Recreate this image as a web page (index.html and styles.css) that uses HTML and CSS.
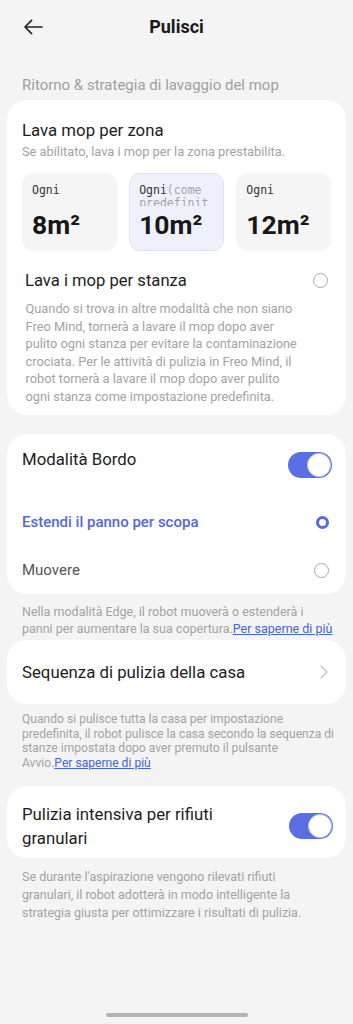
FILE: index.html
```html
<!DOCTYPE html>
<html lang="it">
<head>
<meta charset="utf-8">
<title>Pulisci</title>
<link rel="stylesheet" href="styles.css">
</head>
<body>
<header class="topbar">
  <button class="back" aria-label="Indietro">
    <svg width="20" height="16" viewBox="0 0 20 16"><path d="M19 8H2M8.6 1.4L2 8l6.6 6.6" fill="none" stroke="#222" stroke-width="1.7" stroke-linecap="round" stroke-linejoin="round"/></svg>
  </button>
  <h1 class="title">Pulisci</h1>
  <span></span>
</header>

<div class="section-label">Ritorno &amp; strategia di lavaggio del mop</div>

<section class="card card-mop">
  <div class="card-title">Lava mop per zona</div>
  <div class="card-sub">Se abilitato, lava i mop per la zona prestabilita.</div>
  <div class="tiles">
    <div class="tile">
      <div class="tile-label">Ogni</div>
      <div class="tile-value">8m²</div>
    </div>
    <div class="tile is-selected">
      <div class="tile-label">Ogni<span class="tile-hint">(come predefinito)</span></div>
      <div class="tile-value">10m²</div>
    </div>
    <div class="tile">
      <div class="tile-label">Ogni</div>
      <div class="tile-value">12m²</div>
    </div>
  </div>
  <div class="stanza-row">
    <span>Lava i mop per stanza</span>
    <span class="radio"></span>
  </div>
  <p class="desc">Quando si trova in altre modalità che non siano<br>Freo Mind, tornerà a lavare il mop dopo aver<br>pulito ogni stanza per evitare la contaminazione<br>crociata. Per le attività di pulizia in Freo Mind, il<br>robot tornerà a lavare il mop dopo aver pulito<br>ogni stanza come impostazione predefinita.</p>
</section>

<section class="card card-edge">
  <div class="edge-head">
    <span class="row-title">Modalità Bordo</span>
    <span class="switch"><span class="knob"></span></span>
  </div>
  <div class="option is-active">
    <span>Estendi il panno per scopa</span>
    <span class="radio radio-on"></span>
  </div>
  <div class="option">
    <span>Muovere</span>
    <span class="radio"></span>
  </div>
</section>
<p class="note note-a">Nella modalità Edge, il robot muoverà o estenderà i<br>panni per aumentare la sua copertura.<a href="#">Per saperne di più</a></p>

<section class="card card-seq">
  <span class="row-title">Sequenza di pulizia della casa</span>
  <svg class="chevron" width="8" height="14" viewBox="0 0 8 14"><path d="M1 1l6 6-6 6" fill="none" stroke="#c2c2c2" stroke-width="1.3" stroke-linecap="round" stroke-linejoin="round"/></svg>
</section>
<p class="note note-b">Quando si pulisce tutta la casa per impostazione<br>predefinita, il robot pulisce la casa secondo la sequenza di<br>stanze impostata dopo aver premuto il pulsante<br>Avvio.<a href="#">Per saperne di più</a></p>

<section class="card card-granular">
  <span class="row-title granular-title">Pulizia intensiva per rifiuti granulari</span>
  <span class="switch"><span class="knob"></span></span>
</section>
<p class="note note-c">Se durante l'aspirazione vengono rilevati rifiuti<br>granulari, il robot adotterà in modo intelligente la<br>strategia giusta per ottimizzare i risultati di pulizia.</p>

<div class="home-indicator"></div>
</body>
</html>
```

FILE: styles.css
```css
* { box-sizing: border-box; }

body {
  margin: 0;
  min-height: 1024px;
  background: #f4f4f4;
  font-family: Roboto, "Noto Sans", sans-serif;
  color: #1d1d1d;
  display: flex;
  flex-direction: column;
}

.topbar {
  height: 52px;
  display: grid;
  grid-template-columns: 1fr auto 1fr;
  align-items: center;
}

.back {
  justify-self: start;
  margin-left: 23px;
  padding: 0;
  border: 0;
  background: none;
  display: flex;
  margin-top: 1px;
}

.title {
  margin: 2px 0 0;
  font-size: 18px;
  font-weight: 700;
  line-height: 24px;
  color: #1a1a1a;
}

.section-label {
  margin: 23px 22px 5px;
  font-size: 15px;
  line-height: 20px;
  color: #a0a0a0;
}

.card {
  margin: 0 7px;
  background: #fff;
  border-radius: 20px;
}

.card-mop {
  padding: 19px 15px 10px;
}

.card-title {
  font-size: 16.8px;
  line-height: 22px;
}

.card-sub {
  margin-top: 2.5px;
  font-size: 12.8px;
  line-height: 16px;
  color: #a3a3a3;
}

.tiles {
  margin-top: 13.5px;
  display: grid;
  grid-template-columns: repeat(3, 1fr);
  gap: 12.5px;
}

.tile {
  background: #f5f5f5;
  border: 1px solid transparent;
  border-radius: 11px;
  padding: 9.5px 10px 10px 9px;
}

.tile.is-selected {
  background: #eef0fc;
  border-color: #dde2f6;
}

.tile-label {
  width: 71px;
  height: 22.5px;
  overflow: hidden;
  overflow-wrap: anywhere;
  font-family: "DejaVu Sans Mono", monospace;
  font-size: 11.5px;
  line-height: 13px;
  color: #333;
}

.tile-hint {
  color: #a2a4ae;
}

.tile-value {
  margin-top: 4px;
  font-size: 26.5px;
  line-height: 30px;
  font-weight: 700;
  color: #171717;
}

.stanza-row {
  margin-top: 18.5px;
  padding-left: 3px;
  display: flex;
  align-items: center;
  justify-content: space-between;
  font-size: 16.6px;
  line-height: 22px;
}

.radio {
  width: 15px;
  height: 15px;
  border: 1.2px solid #a9a9a9;
  border-radius: 50%;
  margin-right: 3px;
  flex: none;
}

.radio-on {
  width: 13px;
  height: 13px;
  border: 3.5px solid #5468e0;
  margin-right: 3.5px;
}

.desc {
  margin: 8.5px 0 0;
  padding-left: 3.5px;
  font-size: 12.8px;
  line-height: 17.5px;
  color: #a3a3a3;
}

.card-edge {
  margin-top: 19px;
  padding: 0 14px 0 15px;
}

.edge-head {
  height: 64px;
  padding-top: 13px;
  display: flex;
  justify-content: space-between;
  align-items: flex-start;
}

.row-title {
  font-size: 16.8px;
  line-height: 24px;
}

.switch {
  flex: none;
  width: 44px;
  height: 26px;
  border-radius: 13px;
  background: #5a6fe6;
  display: flex;
  align-items: center;
  justify-content: flex-end;
  padding: 0 1px;
}

.edge-head .switch {
  margin-top: 5px;
}

.knob {
  width: 24px;
  height: 24px;
  border-radius: 50%;
  background: #fff;
  border: 1px solid #c9cde3;
}

.option {
  height: 48px;
  display: flex;
  align-items: center;
  justify-content: space-between;
  font-size: 15px;
  color: #555;
}

.option.is-active {
  color: #5468d6;
  font-weight: 500;
}

.note {
  margin: 10px 4px 0 22px;
  font-size: 12.5px;
  color: #a3a3a3;
}

.note a {
  color: #4465d6;
  text-decoration: underline;
}

.note-a { line-height: 16.5px; }
.note-b { margin-top: 8px; font-size: 12.1px; line-height: 14.7px; }
.note-c { margin-top: 10px; line-height: 18px; }

.card-seq {
  margin-top: 3px;
  height: 64px;
  padding: 0 18px 0 15px;
  display: flex;
  align-items: center;
  justify-content: space-between;
}

.card-granular {
  margin-top: 15px;
  padding: 16px 13px 8px 15px;
  display: flex;
  align-items: center;
  justify-content: space-between;
}

.granular-title {
  max-width: 240px;
}

.home-indicator {
  margin: auto auto 7px;
  width: 142px;
  height: 4px;
  border-radius: 2px;
  background: #b4b4b4;
}
```
